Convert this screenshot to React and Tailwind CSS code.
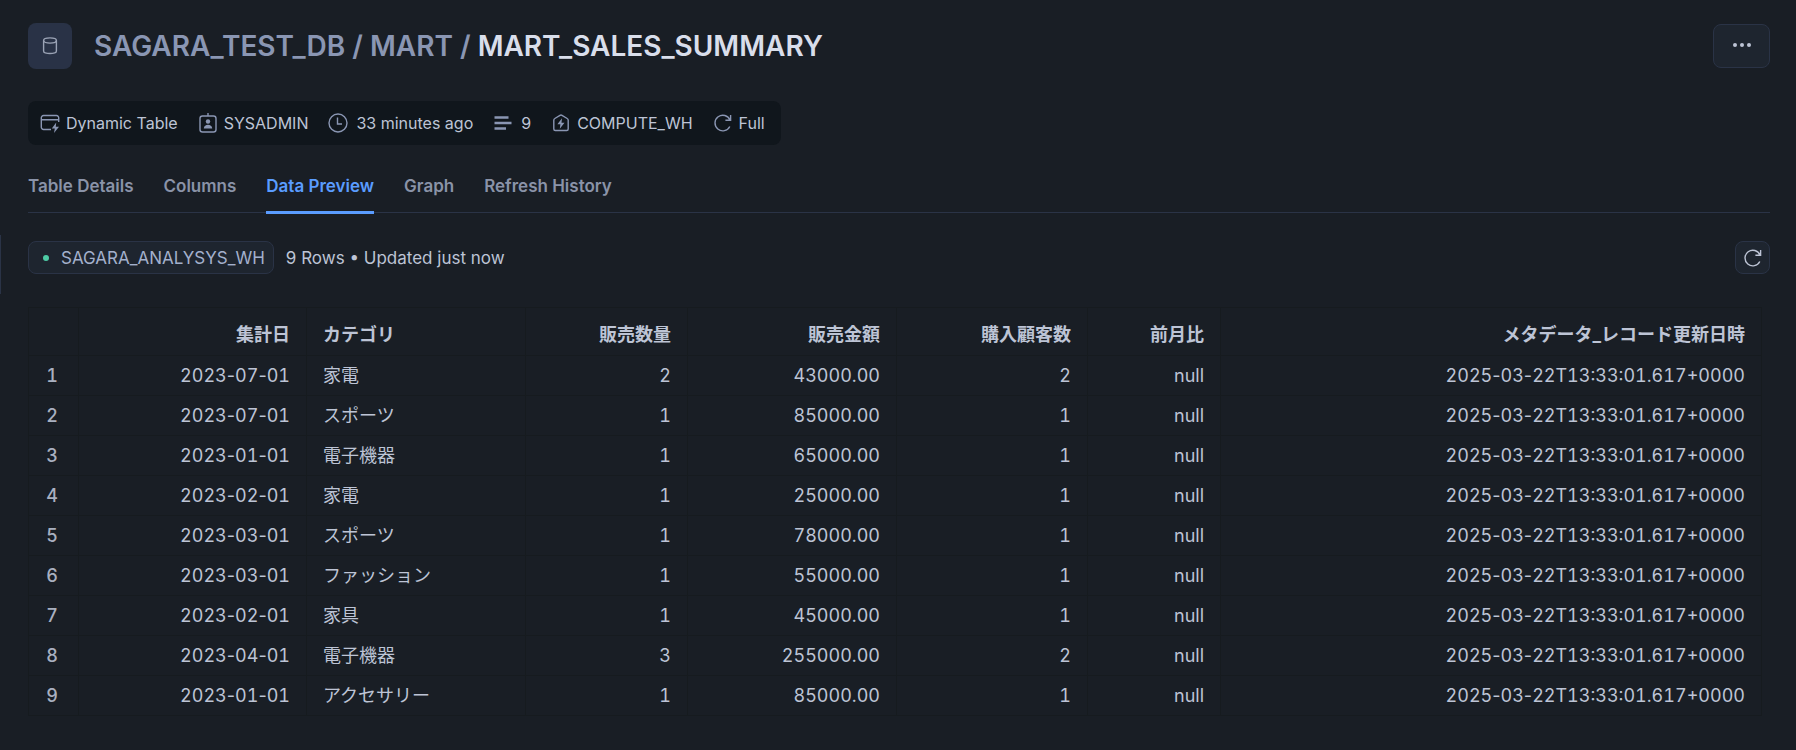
import React, { useState } from "react";

const TABS = ["Table Details", "Columns", "Data Preview", "Graph", "Refresh History"];

const COLUMNS = [
  { key: "date", label: "集計日", align: "text-right", width: "w-[228px]" },
  { key: "category", label: "カテゴリ", align: "text-left", width: "w-[219px]" },
  { key: "quantity", label: "販売数量", align: "text-right", width: "w-[162px]" },
  { key: "amount", label: "販売金額", align: "text-right", width: "w-[209px]" },
  { key: "customers", label: "購入顧客数", align: "text-right", width: "w-[191px]" },
  { key: "mom", label: "前月比", align: "text-right", width: "w-[133px]" },
  { key: "updated", label: "メタデータ_レコード更新日時", align: "text-right", width: "" },
];

const UPDATED_AT = "2025-03-22T13:33:01.617+0000";

const ROWS = [
  ["2023-07-01", "家電", "2", "43000.00", "2"],
  ["2023-07-01", "スポーツ", "1", "85000.00", "1"],
  ["2023-01-01", "電子機器", "1", "65000.00", "1"],
  ["2023-02-01", "家電", "1", "25000.00", "1"],
  ["2023-03-01", "スポーツ", "1", "78000.00", "1"],
  ["2023-03-01", "ファッション", "1", "55000.00", "1"],
  ["2023-02-01", "家具", "1", "45000.00", "1"],
  ["2023-04-01", "電子機器", "3", "255000.00", "2"],
  ["2023-01-01", "アクセサリー", "1", "85000.00", "1"],
].map(([date, category, quantity, amount, customers]) => ({
  date,
  category,
  quantity,
  amount,
  customers,
  mom: "null",
  updated: UPDATED_AT,
}));

const Icon = ({ size = 20, children }) => (
  <svg
    width={size}
    height={size}
    viewBox="0 0 20 20"
    fill="none"
    stroke="currentColor"
    strokeWidth="1.4"
    className="shrink-0"
    aria-hidden="true"
  >
    {children}
  </svg>
);

const DatabaseIcon = () => (
  <Icon>
    <ellipse cx="10" cy="4.5" rx="6.4" ry="2.6" />
    <path d="M3.6 4.500v10.500c0 1 .7 1.700 1.600 1.900 3 .7 6.600.7 9.600 0 .9-.2 1.600-.9 1.600-1.900V4.500" />
  </Icon>
);

const DynamicTableIcon = () => (
  <Icon>
    <path d="M11 16.500H3.500a2.200 2.200 0 0 1-2.200-2.200V4.700a2.200 2.200 0 0 1 2.200-2.200h13a2.200 2.200 0 0 1 2.200 2.200V9M1.300 6.800h17.400" />
    <path d="M16.200 9.600l-4.400 6h3l-.8 4.400 5-6.200h-3.200z" fill="currentColor" stroke="none" />
  </Icon>
);

const RoleIcon = () => (
  <Icon>
    <rect x="2" y="3" width="16" height="16" rx="2.5" />
    <path d="M10 0v3" />
    <circle cx="10" cy="8.5" r="2.2" fill="currentColor" stroke="none" />
    <path d="M5.800 15.500c0-5 8.400-5 8.400 0z" fill="currentColor" stroke="none" />
  </Icon>
);

const ClockIcon = () => (
  <Icon>
    <circle cx="10" cy="10" r="9" />
    <path d="M9.500 4.500v6.500H14" />
  </Icon>
);

const RowsIcon = () => (
  <Icon>
    <path d="M1.500 4.500h14M1.500 10h17M1.500 15.500h11.500" strokeWidth="2.600" />
  </Icon>
);

const WarehouseIcon = () => (
  <Icon>
    <path d="M2.800 7.200a2 2 0 0 1 1-1.700L9 2.300a2 2 0 0 1 2 0l5.200 3.200a2 2 0 0 1 1 1.700v8.800a1.500 1.500 0 0 1-1.500 1.500H4.300A1.500 1.500 0 0 1 2.800 16z" />
    <path d="M11 5.300l-4.600 5.900h3l-.6 4.500 4.700-5.900h-3z" fill="currentColor" stroke="none" />
  </Icon>
);

const RefreshIcon = () => (
  <Icon>
    <path d="M16.800 13.500A7.800 7.800 0 1 1 17 7M17.600 2v5.200h-5.200" />
  </Icon>
);

const DotsIcon = () => (
  <Icon>
    <g fill="currentColor" stroke="none">
      <circle cx="3" cy="9" r="2" />
      <circle cx="10" cy="9" r="2" />
      <circle cx="17" cy="9" r="2" />
    </g>
  </Icon>
);

const Meta = ({ icon, gap = "gap-1.5", children }) => (
  <li className={`flex items-center ${gap}`}>
    <span className="text-[#8a96b3]">{icon}</span>
    <span>{children}</span>
  </li>
);

// Inter's tabular figures also widen the hyphen, so hyphens keep their normal width
const CellText = ({ value }) =>
  value.split("-").map((part, i) => (
    <React.Fragment key={i}>
      {i > 0 && <span className="normal-nums">-</span>}
      {part}
    </React.Fragment>
  ));

const App = () => {
  const [activeTab, setActiveTab] = useState("Data Preview");

  return (
    <div className="relative min-h-screen bg-[#191e25] pl-7 pr-[26px] pt-[23px] pb-8 text-[17px] leading-6 text-[#bdc4d5] font-[Inter,'Noto_Sans_CJK_JP',sans-serif]">
      {/* Edge of the collapsed side panel */}
      <div className="absolute left-0 top-[235px] h-[59px] w-px bg-[#2a3346]" />

      {/* Title */}
      <header className="flex items-center justify-between">
        <div className="flex items-center gap-[22px]">
          <div className="flex h-[46px] w-11 items-center justify-center rounded-lg bg-[#293246] text-[#9ba3b5]">
            <DatabaseIcon />
          </div>
          <h1 className="text-[28px] leading-9 font-semibold text-[#8a96b3]">
            SAGARA_TEST_DB / MART / <span className="text-[#d9deeb]">MART_SALES_SUMMARY</span>
          </h1>
        </div>
        <button
          type="button"
          aria-label="More actions"
          className="flex h-11 w-[57px] items-center justify-center rounded-lg border border-[#2a3346] bg-[#1e252f] text-[#bdc4d5]"
        >
          <DotsIcon />
        </button>
      </header>

      {/* Table metadata */}
      <ul className="mt-8 flex h-11 w-fit items-center gap-5 rounded-lg bg-[#10161c] pl-3 pr-4 text-base">
        <Meta icon={<DynamicTableIcon />}>Dynamic Table</Meta>
        <Meta icon={<RoleIcon />}>SYSADMIN</Meta>
        <Meta icon={<ClockIcon />} gap="gap-2">33 minutes ago</Meta>
        <Meta icon={<RowsIcon />} gap="gap-2">9</Meta>
        <Meta icon={<WarehouseIcon />}>COMPUTE_WH</Meta>
        <Meta icon={<RefreshIcon />}>Full</Meta>
      </ul>

      {/* Tabs */}
      <nav className="mt-[29px] flex gap-[30px] border-b border-[#2a3346]">
        {TABS.map((tab) => (
          <button
            key={tab}
            type="button"
            onClick={() => setActiveTab(tab)}
            className={`-mb-0.5 border-b-3 pb-[13px] font-semibold ${
              tab === activeTab
                ? "border-[#5a9cff] text-[#5a9cff]"
                : "border-transparent text-[#8a93a8]"
            }`}
          >
            {tab}
          </button>
        ))}
      </nav>

      {/* Warehouse and status */}
      <div className="mt-7 flex items-center justify-between">
        <div className="flex items-center gap-3">
          <button
            type="button"
            className="flex h-[33px] items-center gap-3 rounded-lg border border-[#2a3346] bg-[#1e252f] pl-[14px] pr-2 text-[#a3b0cc]"
          >
            <span className="size-1.5 rounded-full bg-[#4ecba5]" />
            SAGARA_ANALYSYS_WH
          </button>
          <p>9 Rows • Updated just now</p>
        </div>
        <button
          type="button"
          aria-label="Refresh data"
          className="flex h-[33px] w-[35px] items-center justify-center rounded-lg border border-[#2a3346] bg-[#1e252f] text-[#bdc4d5]"
        >
          <RefreshIcon />
        </button>
      </div>

      {/* Preview grid */}
      <div className="mt-[33px] pr-2">
        <table className="w-full table-fixed border-collapse text-lg tabular-nums">
          <thead>
            <tr className="h-12">
              <th className="w-[50px] border border-[#161b1f]" />
              {COLUMNS.map((col) => (
                <th
                  key={col.key}
                  scope="col"
                  className={`border border-[#161b1f] px-4 pt-1.5 font-bold ${col.align} ${col.width}`}
                >
                  {col.label}
                </th>
              ))}
            </tr>
          </thead>
          <tbody>
            {ROWS.map((row, i) => (
              <tr key={i} className="h-10">
                <td className="border border-[#161b1f] pr-5 text-right font-medium text-[#a9b0c0]">{i + 1}</td>
                {COLUMNS.map((col) => (
                  <td key={col.key} className={`border border-[#161b1f] px-4 ${col.align}`}>
                    <CellText value={row[col.key]} />
                  </td>
                ))}
              </tr>
            ))}
          </tbody>
        </table>
      </div>
    </div>
  );
};

export default App;
